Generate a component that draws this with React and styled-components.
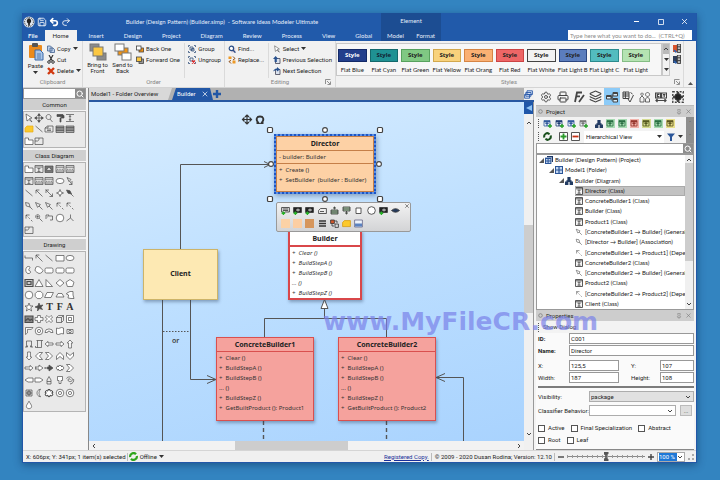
import React from 'react'
import styled, { createGlobalStyle, css } from 'styled-components'
import { Settings, Printer, Layers, Search, Undo2, Redo2, Save, X, Pin } from 'lucide-react'

const GlobalStyle = createGlobalStyle`
* {
    box-sizing: border-box;
}
body {
    margin: 0;
    background: #3384c0;
    color: #222;
    font-family: Roboto, "Liberation Sans", sans-serif;
    font-size: 6px;
    line-height: 8px;
}
button, input, select {
    margin: 0;
    padding: 0;
    border: 0;
    border-radius: 0;
    background: none;
    color: inherit;
    font: inherit;
}
svg {
    display: block;
    flex: none;
}
`

/* ---------- data ---------- */

const tabs = ['Insert', 'Design', 'Project', 'Diagram', 'Review', 'Process', 'View', 'Global']

const styleList = [
    { name: 'Flat Blue', bg: '#233f8c', line: '#142a68', color: '#fff' },
    { name: 'Flat Cyan', bg: '#1f9193', line: '#14696c', color: '#123' },
    { name: 'Flat Green', bg: '#80c883', line: '#58a25e' },
    { name: 'Flat Yellow', bg: '#f8d27c', line: '#d2a84e' },
    { name: 'Flat Orang', bg: '#fab073', line: '#d68444' },
    { name: 'Flat Red', bg: '#ee6666', line: '#cc4444' },
    { name: 'Flat White', bg: '#f2f2f2', line: '#444' },
    { name: 'Flat Light B', bg: '#5b7dbd', line: '#2c4680' },
    { name: 'Flat Light C', bg: '#53bcbf', line: '#2c8b8e' },
    { name: 'Flat Light', bg: '#b5e3b2', line: '#84bd84' },
]

const tree = [
    { level: 0, icon: 'project', text: 'Builder (Design Pattern) (Project)', open: true },
    { level: 1, icon: 'model', text: 'Model1 (Folder)', open: true },
    { level: 2, icon: 'diagram', text: 'Builder (Diagram)', open: true },
    { level: 3, icon: 'class', text: 'Director (Class)', selected: true },
    { level: 3, icon: 'class', text: 'ConcreteBuilder1 (Class)' },
    { level: 3, icon: 'class', text: 'Builder (Class)' },
    { level: 3, icon: 'class', text: 'Product1 (Class)' },
    { level: 3, icon: 'general', text: '[ConcreteBuilder1 → Builder] (General' },
    { level: 3, icon: 'assoc', text: '[Director → Builder] (Association)' },
    { level: 3, icon: 'depend', text: '[ConcreteBuilder1 → Product1] (Depen' },
    { level: 3, icon: 'class', text: 'ConcreteBuilder2 (Class)' },
    { level: 3, icon: 'general', text: '[ConcreteBuilder2 → Builder] (General' },
    { level: 3, icon: 'class', text: 'Product2 (Class)' },
    { level: 3, icon: 'depend', text: '[ConcreteBuilder2 → Product2] (Depen' },
    { level: 3, icon: 'class', text: 'Client (Class)' },
]

// every shape is drawn on a 10 x 10 grid; f = filled with the stroke colour
const shapes = {
    pointer: { d: 'M2 1L8 5L5.5 5.5L8 9L5 6.5L3 8Z' },
    move: { d: 'M5 1V9M1 5H9M5 .6L3.6 2.6H6.4ZM5 9.4L3.6 7.4H6.4ZM.6 5L2.6 3.6V6.4ZM9.4 5L7.4 3.6V6.4Z', f: true },
    zoom: { d: 'M4.5 1.5A2.5 2.5 0 1 0 4.6 1.5ZM6 6L8.5 9' },
    roller: { d: 'M2 1.5H8V3.5H2ZM8 2.5H9V5H5.5M5 5H6V9H5Z', f: true },
    space: { d: 'M1 1.5H9M1 8.5H9M5 2.5V7.5M4 4L5 2.5L6 4M4 6L5 7.5L6 6' },
    note: { d: 'M1 4L3 2H9V8H1Z', c: '#e9ae16', bg: '#fbc92c' },
    line: { d: 'M1.5 2L8.5 8' },
    stack: { d: 'M1 4L3.5 2H9V8H1ZM3 5H7M3 6.5H7M1 4H4V2' },
    list: { d: 'M1 2H9V8.5H1ZM1 3.5H9M1 5H9M1 6.5H9', bg: '#aaa' },
    folder: { d: 'M1 2H4.5V4H9V8.5H1Z' },
    frame: { d: 'M1 2H9V8.5H1ZM1 5H3.5L5 3.8V2' },
    cls: { d: 'M1 1.5H9V8.5H1ZM1 3H9M3.6 4.5H6.4M3.6 7.5H6.4M3.8 4.6L5.4 6L3.8 7.4' },
    sub: { d: 'M1 2H9V8.5H1ZM2.6 6.4H7.4V5H6.4V3.6H3.6V5H2.6Z', bg: '#777' },
    attr: { d: 'M1 1.5H9V8.5H1ZM1 3.2H9M2 5.3H3.4M4.3 5.3H5.7M6.6 5.3H8M1 7H9' },
    oval: { d: 'M1 5A4 2.6 0 1 0 9 5A4 2.6 0 1 0 1 5Z' },
    sig: { d: 'M2 1.5L6 3.5L4 5.5ZM4.5 5L7 8.5M7 5V8.5H4' },
    arrow: { d: 'M2 2L8.5 8.5M2 2V5.4M2 2H5.4' },
    arrow2: { d: 'M1.5 1.5L8.5 8.5M2 2V5M2 2H5M8.5 8.5V5.5M8.5 8.5H5.5' },
    cross: { d: 'M5 1.5L6 4L8.5 5L6 6L5 8.5L4 6L1.5 5L4 4Z' },
    dia: { d: 'M1.5 2L5 2.8L6.5 6L3 5.2ZM6 6L8.5 8.5', f: true },
    gen: { d: 'M1.5 1.5L6.4 3.6L3.6 6.4ZM5 5L8.5 8.5' },
    aggr: { d: 'M1.5 1.5L5 2.3L6 6L2.3 5ZM6 6L8.5 8.5' },
    dep: { d: 'M2 2V5.6M2 2H5.6M2 2L3.4 3.4M4.4 4.4L5.8 5.8M7 7L8.4 8.4' },
    nest: { d: 'M3.6 1.6A2 2 0 1 0 3.7 1.6M3.6 2.4V4.8M2.4 3.6H4.8M5.2 5.2L8.5 8.5' },
    loop: { d: 'M2 2V6M2 2H5L3.4 4.4M5 3H8.5V7H6' },
    circle: { d: 'M1.2 5A3.8 3.8 0 1 0 8.8 5A3.8 3.8 0 1 0 1.2 5Z' },
    fork: { d: 'M5.5 1.5V5L1.5 8M5.5 5L8.5 8' },
    elbow: { d: 'M1 2.5V5H8.5V7.5' },
    rect: { d: 'M1 2.5H9V8H1Z' },
    curve: { d: 'M4 1.5C1 2 1 8 4 8.5C7 8.8 7.5 6 5 5.6C3.6 5 6 3.4 6 2.2C5.6 1.4 5 1.4 4 1.5Z' },
    blob: { d: 'M2 2C4 .8 6.6 2 9 5.6C8 8.4 5 9 4 8C3 7 1 6.6 1 5Z' },
    round: { d: 'M2.4 3H7.6A1.4 1.4 0 0 1 9 4.4V6.6A1.4 1.4 0 0 1 7.6 8H2.4A1.4 1.4 0 0 1 1 6.6V4.4A1.4 1.4 0 0 1 2.4 3Z' },
    bevel: { d: 'M1 1.5H9V8.5H1ZM3 3.5H7V6.5H3Z', bg: '#ccc', w: 1.2 },
    tri: { d: 'M5 1.5L9 8.5H1Z' },
    rtri: { d: 'M2 1.5L8.5 8.5H2Z' },
    rhomb: { d: 'M5 1.5L9 5L5 8.5L1 5Z' },
    penta: { d: 'M5 1.5L9 4.2L7.6 8.5H2.4L1 4.2Z' },
    hexa: { d: 'M3.4 1.4H6.6L8.8 3.6V6.4L6.6 8.6H3.4L1.2 6.4V3.6Z' },
    para: { d: 'M3 2.5H9.4L7 7.5H.6Z' },
    trap: { d: 'M3 3.5H7L9 7H1Z' },
    cut: { d: 'M2 3L5 1.5H8L8 5L9 8.5H6L3 8L3.6 5L1.4 4Z' },
    star: { d: 'M5 1L6.2 4H9L6.8 5.8L7.6 9L5 7L2.4 9L3.2 5.8L1 4H3.8Z' },
    burst: { d: 'M5 1L6 3.5L9 3L7 5.2L8.5 7.5L5.5 6.6L3.5 9L3.8 6L1 5L4 3.8Z', f: true },
    pic: { d: 'M1 2H9V8.5H1ZM1 7L4 4.6L6 6.5L7.4 5.2L9 7', bg: '#888', w: 1.1 },
    plus: { d: 'M3.6 1.5H6.4V3.6H9V6.4H6.4V8.5H3.6V6.4H1V3.6H3.6Z' },
    xshape: { d: 'M3 1.5L5 3.5L7 1.5L8.6 3L6.6 5L8.6 7L7 8.6L5 6.6L3 8.6L1.4 7L3.4 5L1.4 3Z' },
    cube: { d: 'M1.5 3.5H6.5V8.5H1.5ZM1.5 3.5L3.5 1.5H8.5V6.5L6.5 8.5M6.5 3.5L8.5 1.5' },
    square2: { d: 'M1.5 1.5H8.5V8.5H1.5ZM3.5 3.5H6.5V6.5H3.5Z' },
    corner: { d: 'M1.5 8.5V1.5H9L7.4 3.4H3.4V7Z' },
    ring: { d: 'M1.2 5A3.8 3.8 0 1 0 8.8 5A3.8 3.8 0 1 0 1.2 5ZM3.4 5A1.6 1.6 0 1 0 6.6 5A1.6 1.6 0 1 0 3.4 5Z' },
    arc: { d: 'M1 6.5A4 3.6 0 0 1 9 6.5H6.6A1.6 1.4 0 0 0 3.4 6.5Z' },
    wave: { d: 'M1.5 2Q3.5 3 5 2T8.5 2V8Q6.5 7 5 8T1.5 8Z' },
    eye: { d: 'M2 3.5H8V7.5H2ZM3.6 5.5A1.4 1.2 0 1 0 6.4 5.5A1.4 1.2 0 1 0 3.6 5.5Z' },
    scroll: { d: 'M2.5 8V2H7.5V8M1 8H3.5V6.5M9 8H6.5V6.5' },
    scroll2: { d: 'M2.5 1.5H9M3.5 1.5V8.5M7.5 1.5V8.5H1.5V7' },
    left: { d: 'M1 5L4 2.4V4H9V6H4V7.6Z' },
    right: { d: 'M9 5L6 2.4V4H1V6H6V7.6Z' },
    up: { d: 'M5 1L7.8 4H6.4V9H3.6V4H2.2Z' },
    down: { d: 'M5 9L7.8 6H6.4V1H3.6V6H2.2Z' },
    chevl: { d: 'M5 1.5H8.5L5.5 5L8.5 8.5H5L1.5 5Z' },
    chevr: { d: 'M5 1.5H1.5L4.5 5L1.5 8.5H5L8.5 5Z' },
    chevu: { d: 'M1.5 5V8.5L5 5.5L8.5 8.5V5L5 1.5Z' },
    chevd: { d: 'M1.5 5V1.5L5 4.5L8.5 1.5V5L5 8.5Z' },
    notch: { d: 'M1 4H5V2L9 5L5 8V6H1L2.4 5Z' },
    fast: { d: 'M1 4V6M2 4V6M3.4 4H5V2L9 5L5 8V6H3.4Z', f: true },
    both: { d: 'M1 5L3 2.6V4L5 2L7 4V2.6L9 5L7 7.4V6L5 8L3 6V7.4Z' },
    tagl: { d: 'M1 5L4 3H9V7H4Z' },
    tagr: { d: 'M9 5L6 3H1V7H6Z' },
    lock: { d: 'M3 9V5L5 1.5L7 5V9ZM3 6.5H7' },
    cup: { d: 'M2.5 1.5H7.5V5.5H6V8.5H4V5.5H2.5Z' },
    swirl: { d: 'M5 5C6 3.6 3 3 3 5C3 7.4 7.6 7 7.4 4.4C7 1.2 2 1.4 1.6 3.6M5 9C8 8.6 9 6.6 8.6 4' },
    grid: { d: 'M2 2H8V8H2ZM3.4 3.4H6.6V6.6H3.4ZM5 2V8M2 5H8' },
    moon: { d: 'M6.6 1.2C1.8 1.6 1.8 8.4 6.6 8.8C4.4 6.4 4.4 3.6 6.6 1.2Z' },
    gear: { d: 'M4 1.5H6V3L8 2.6L9 4.4L7.6 5L9 6L8 8L6 7.2V8.6H4V7.2L2 8L1 6L2.4 5L1 4.4L2 2.6L4 3Z', w: 1 },
    drop: { d: 'M5 1.2C6 3.4 7.8 5 7.6 6.6C7.2 9.4 2.8 9.4 2.4 6.6C2.2 5 4 3.4 5 1.2Z' },
}

const common = ['pointer', 'move', 'zoom', 'roller', 'space', 'note', 'line', 'stack', 'list', 'list', 'folder', 'frame']
const classShapes = [
    'folder', 'cls', 'sub', 'attr', 'attr', 'cls', 'attr', 'attr', 'oval', 'sig', 'line', 'arrow', 'arrow2', 'cross', 'dia',
    'aggr', 'gen', 'gen', 'dep', 'dep', 'dep', 'nest', 'loop', 'circle', 'fork', 'frame',
]
const drawing = [
    'elbow', 'arrow', 'line', 'rect', 'oval', 'curve', 'blob', 'round', 'round', 'round', 'bevel', 'tri', 'rtri', 'rhomb', 'penta',
    'circle', 'hexa', 'para', 'trap', 'cut', 'star', 'burst', 'T', 'F', 'A', 'pic', 'plus', 'xshape', 'cube', 'square2',
    'corner', 'ring', 'arc', 'wave', 'eye', 'scroll', 'scroll2', 'left', 'right', 'up', 'down', 'chevl', 'chevr', 'chevu', 'chevd',
    'right', 'notch', 'fast', 'both', 'chevr', 'tagl', 'tagr', 'lock', 'cup', 'swirl', 'grid', 'moon', 'gear', 'ring', 'ring', 'drop',
]

const builderOps = ['+  Clear ()', '+  BuildStepA ()', '+  BuildStepB ()', '... ()', '+  BuildStepZ ()']

/* ---------- icons ---------- */

const Glyph = ({ name, size = 10 }) => {
    const s = shapes[name]
    if (!s) return <Letter>{name}</Letter>
    const color = s.c || '#4c4c4c'
    return (
        <svg width={size} height={size} viewBox="0 0 10 10">
            <path d={s.d} fill={s.f ? color : s.bg || (s.d.endsWith('Z') ? '#fff' : 'none')} stroke={color} strokeWidth={s.w || 0.7} />
        </svg>
    )
}

const Caret = () => (
    <svg width="5" height="3" viewBox="0 0 5 3"><path d="M0 0H5L2.5 3Z" fill="#333" /></svg>
)

const Chevron = ({ dir = 'down' }) => {
    const d = { down: 'M1 2L3 4L5 2', up: 'M1 4L3 2L5 4', left: 'M4 1L2 3L4 5', right: 'M2 1L4 3L2 5' }[dir]
    return <svg width="6" height="6" viewBox="0 0 6 6"><path d={d} fill="none" stroke="#444" /></svg>
}

const Launcher = () => (
    <svg width="6" height="6" viewBox="0 0 6 6"><path d="M.5 5V.5H5.5M2 2L5 5M5.5 2.5V5.5H2.5" fill="none" stroke="#777" strokeWidth=".8" /></svg>
)

const PasteIcon = () => (
    <svg width="16" height="18" viewBox="0 0 16 18">
        <rect x="1" y="2" width="13" height="13" rx="1" fill="#ea8a1c" />
        <rect x="4" y="0" width="6" height="4" rx="1" fill="#555" />
        <path d="M7 7H12L15 10V17H7Z" fill="#a9c6ea" stroke="#3a69a8" />
        <path d="M9 11H13M9 13H13M9 15H13" stroke="#3a69a8" strokeWidth=".8" />
    </svg>
)

const CopyIcon = () => (
    <svg width="8" height="8" viewBox="0 0 8 8">
        <path d="M.5 1H3.5L5 2.5V6H.5ZM3 3H6L7.5 4.5V7.5H3Z" fill="#bcd0ea" stroke="#44628f" strokeWidth=".8" />
    </svg>
)

const CutIcon = () => (
    <svg width="8" height="9" viewBox="0 0 8 9">
        <path d="M2 0L5.4 6M6 0L2.6 6" stroke="#333" strokeWidth="1.2" />
        <circle cx="2" cy="7" r="1.3" fill="none" stroke="#333" />
        <circle cx="6" cy="7" r="1.3" fill="none" stroke="#333" />
    </svg>
)

const DeleteIcon = () => (
    <svg width="8" height="8" viewBox="0 0 8 8"><path d="M1 1L7 7M7 1L1 7" stroke="#d1380f" strokeWidth="2.4" /></svg>
)

const ORDER = {
    front: ['#8b8b8b', '#8b8b8b', '#fbc741'],
    back: ['#fff', '#fff', '#f29312'],
}

const OrderIcon = ({ kind }) => (
    <svg width="18" height="18" viewBox="0 0 18 18" stroke="#777">
        {kind === 'back' && <rect x="4" y="5" width="10" height="7" fill={ORDER.back[2]} />}
        <rect x="1" y="1" width="9" height="7" fill={ORDER[kind][0]} />
        <rect x="8" y="10" width="9" height="7" fill={ORDER[kind][1]} />
        {kind === 'front' && <rect x="4" y="4" width="10" height="9" fill={ORDER.front[2]} />}
    </svg>
)

const BackOneIcon = () => (
    <svg width="8" height="8" viewBox="0 0 8 8" stroke="#444" strokeWidth=".8">
        <rect x="3" y="3" width="4.5" height="4" fill="#f29312" />
        <rect x=".5" y="1" width="4.5" height="4" fill="#fff" />
    </svg>
)

const ForwardOneIcon = () => (
    <svg width="8" height="8" viewBox="0 0 8 8" stroke="#444" strokeWidth=".8">
        <rect x="3" y="3" width="4.5" height="4.5" fill="#999" />
        <rect x=".5" y="1" width="5" height="4.5" fill="#fbc741" />
    </svg>
)

const GroupIcon = ({ off }) => (
    <svg width="8" height="8" viewBox="0 0 8 8" fill="none" stroke="#33507c" strokeWidth=".8">
        <path d="M.5 2V.5H2M6 .5H7.5V2M7.5 6V7.5H6M2 7.5H.5V6" />
        <path d="M2 2H5V5H2Z" />
        {off ? <path d="M4 4.5L7 7.5M7 4.5L4 7.5" stroke="#d22" strokeWidth="1.2" /> : <path d="M3.5 3.5H6V6H3.5Z" />}
    </svg>
)

const FindIcon = () => (
    <svg width="8" height="8" viewBox="0 0 8 8">
        <path d="M3.4 2.6H7.5V7.5H3.4Z" fill="#e3d0d8" />
        <circle cx="3.4" cy="3.4" r="2.2" fill="#fff" stroke="#2a4d86" strokeWidth="1.2" />
        <path d="M5 5L7.4 7.6" stroke="#2a4d86" strokeWidth="1.4" />
    </svg>
)

const ReplaceIcon = () => (
    <svg width="8" height="8" viewBox="0 0 8 8">
        <path d="M.5 .5H3.5V3H.5ZM4.5 4.5H7.5V7.5H4.5Z" fill="#ee9a26" />
        <path d="M5 .5L7 2.5L5 4M3 7.5L1 5.5L3 4.4" fill="none" stroke="#8a4b13" />
    </svg>
)

const PrevNextIcon = ({ next }) => (
    <svg width="8" height="8" viewBox="0 0 8 8">
        <path d="M2.5 2.5H7V7.5H2.5Z" fill="#dbe3ef" stroke="#445" strokeWidth=".8" />
        <path d={next ? 'M0 4.5C1 2 3 1.6 4 1.6V0L7 2.4L4 4.6V3.2C3 3.2 1 3.4 0 4.5Z' : 'M2.6 0L5.4 3H3.8V6H1.6V3H0Z'} fill="#28518e" />
    </svg>
)

const TreeIcon = ({ kind }) => {
    if (kind === 'general') return <Glyph name="gen" size={8} />
    if (kind === 'assoc') return <Glyph name="aggr" size={8} />
    if (kind === 'depend') return <Glyph name="dep" size={8} />
    if (kind === 'class') {
        return (
            <svg width="8" height="8" viewBox="0 0 8 8" fill="none" stroke="#333">
                <path d="M.5 .5H7.5V7.5H.5Z" fill="#f4f4f4" strokeWidth=".8" />
                <path d="M.5 1.8H7.5M2.6 3.2H5.6M2.6 6.2H5.6M4 3.4V6" strokeWidth=".8" />
            </svg>
        )
    }
    if (kind === 'diagram') {
        return (
            <svg width="8" height="8" viewBox="0 0 8 8" fill="#233c63">
                <path d="M2.4 0H5.6V3.2H2.4ZM0 4.6H3.4V8H0ZM4.6 4.6H8V8H4.6ZM1.4 3.2H6.6V5H1.4Z" />
            </svg>
        )
    }
    return (
        <svg width="8" height="8" viewBox="0 0 8 8" fill="#2a5598">
            {kind === 'project' && <path d="M2 0H8V6H6.8V1.2H2Z" fill="#1d3766" />}
            <path d={kind === 'project' ? 'M0 1.6H6.4V8H0Z' : 'M0 0H8V8H0Z'} />
            <path d={kind === 'project' ? 'M1 3H2.6V4.4H1ZM3.6 3H5.4V4.4H3.6ZM1 5.4H2.6V7H1ZM3.6 5.4H5.4V7H3.6Z' : 'M1 1H3.4V3.4H1ZM4.6 1H7V3.4H4.6ZM1 4.6H3.4V7H1ZM4.6 4.6H7V7H4.6Z'} fill="#c3d6f0" />
        </svg>
    )
}

const ToolIcon = ({ kind }) => (
    <svg width="12" height="12" viewBox="0 0 12 12" fill="none" stroke="#444">
        {kind === 'format' && <path d="M2 11L4 1.5H9M3 5.4H7M11 4L7.4 9L6 11" strokeWidth="1.8" />}
        {kind === 'structure' && (
            <g>
                <path d="M.5 4.5H5V8H.5ZM7 1.5H11.5V5H7ZM7 7.5H11.5V11H7Z" fill="#d9eefc" />
                <path d="M7 2.5H11.5M7 8.5H11.5M5 6H7M6 3.5V9.5M.5 5.5H5" strokeWidth="1.2" />
            </g>
        )}
        {kind === 'docs' && <path d="M1 1H7V7.5H1ZM1 3H7M1 5H7M3.4 1V7.5M6 8L8 11L11.5 4M8.5 1.5L10.5 3" />}
        {kind === 'people' && (
            <path d="M3 2A1.2 1.2 0 1 0 3.1 2M1 11V7L3 5L5 7V11ZM8.5 1.5A2 2 0 1 0 8.6 1.5M6.5 11V8L8.5 6L10.5 8V11Z" strokeWidth=".8" />
        )}
        {kind === 'ct' && <path d="M.6 2H5.6V7H.6ZM6.6 2H11.6V7H6.6ZM4.4 3.4H2.4V5.6H4.4M8 3.6H10.4M9.2 3.6V6M1 9.5H11M2.5 8L1 9.5L2.5 11M9.5 8L11 9.5L9.5 11" strokeWidth="1.2" />}
        {kind === 'sun' && (
            <g>
                <path d="M.8 .8H11.2V11.2H.8Z" strokeDasharray="2 1.4" strokeWidth="1.4" />
                <path d="M6 1V11M1 6H11" strokeWidth="2" />
                <circle cx="6" cy="6" r="3.4" fill="#222" />
            </g>
        )}
    </svg>
)

const DocIcon = ({ color = '#31589c', tint, add }) => (
    <svg width="9" height="9" viewBox="0 0 9 9">
        {tint && <path d="M0 0H9V9H0Z" fill={tint} />}
        <path d="M1 1.5H7V7H1Z" fill={tint || '#eef3fa'} stroke={color} strokeWidth=".8" />
        <path d="M1 2.6H7M2.4 4.4H5.6M4 3V7" stroke={color} strokeWidth="1.2" />
        {add && <path d="M7 5V9M5 7H9" stroke="#28a428" strokeWidth="1.4" />}
    </svg>
)

const PopupIcon = ({ kind }) => (
    <svg width="9" height="9" viewBox="0 0 9 9" stroke="#333" strokeWidth=".8">
        {kind === 'light' && <path d="M.6 1.5H8.4V6H4L2 8V6H.6ZM2 3H7M2 4.5H7" fill="#ddd" />}
        {kind === 'dark' && <path d="M.6 1.5H8.4V6.5H4L2 8V6.5H.6Z" fill="#222" />}
        {kind === 'dark' && <path d="M3 4H7M5 2.5V5.5" stroke="#eee" />}
        {(kind === 'light' || kind === 'dark') && <path d="M2.4 5.4V9M.6 7.2H4.2" stroke="#27b227" strokeWidth="1.4" />}
        {kind === 'tag' && <path d="M.6 4.4L2.6 2.5H8.4V7.5H.6ZM2 5.5H6" fill="#eee" />}
        {kind === 'in' && <path d="M1 4H8V8H1ZM1 6H8M4.5 3.5V1M3 2.4L4.5 1L6 2.4" fill="#9b9" />}
        {kind === 'out' && <path d="M1 1H8V5H1ZM1 3H8M4.5 5V8M3 6.6L4.5 8L6 6.6" fill="#aca" />}
        {kind === 'square' && <path d="M2 2H7V7.5H2Z" fill="#fff" />}
        {kind === 'circle' && <circle cx="4.5" cy="4.5" r="3.8" fill="#fff" />}
        {kind === 'eye' && <path d="M.5 4.5Q4.5 .8 8.5 4.5Q4.5 8 .5 4.5Z" fill="#243a5c" />}
        {kind === 'lines' && <path d="M1 2H8M1 4.5H8M1 7H8" strokeWidth="1.6" />}
        {kind === 'swap' && <path d="M.6 1H4.4V4.5H.6Z" fill="#d2572b" />}
        {kind === 'swap' && <path d="M5 5H8.4V8.4H5ZM5 2H7V4M4 7H2V5" fill="none" />}
        {kind === 'folder' && <path d="M.6 3.5L2.4 1.6H8.4V7.6H.6Z" fill="#fcc92c" stroke="#d69c12" />}
        {kind === 'panel' && <path d="M.6 1H8.4V8H.6Z" fill="#eef3fa" stroke="#668" />}
        {kind === 'panel' && <path d="M1 6H8" stroke="#5b82c0" strokeWidth="3" />}
    </svg>
)

/* ---------- small parts ---------- */

const SmallButton = ({ icon, label, menu }) => (
    <RibbonItem type="button">
        {icon}
        <span>{label}</span>
        {menu && <Caret />}
    </RibbonItem>
)

const ClassBox = ({ title, items, ...rest }) => (
    <Entity {...rest}>
        <EntityTitle>{title}</EntityTitle>
        <EntityBody>
            {items.map((item, i) => <span key={i}>{item}</span>)}
        </EntityBody>
    </Entity>
)

const Palette = ({ title, items, height }) => (
    <>
        <PaletteTitle>{title}</PaletteTitle>
        <PaletteGrid $height={height}>
            {items.map((name, i) => (
                <PaletteButton type="button" key={i} aria-label={name}><Glyph name={name} /></PaletteButton>
            ))}
        </PaletteGrid>
    </>
)

const PanelTitle = ({ children }) => (
    <PanelHeader>
        <svg width="5" height="5" viewBox="0 0 5 5"><circle cx="2.5" cy="2.5" r="1.8" fill="none" stroke="#777" strokeWidth=".7" /></svg>
        <h2>{children}</h2>
        <Pin size={6} color="#777" />
        <X size={7} color="#777" />
    </PanelHeader>
)

/* ---------- page parts ---------- */

const TitleBar = () => (
    <Header>
        <TitleRow>
            <svg width="12" height="12" viewBox="0 0 13 13">
                <circle cx="6.5" cy="6.5" r="6" fill="#dfe6ee" />
                <circle cx="6.5" cy="6.5" r="4.8" fill="none" stroke="#333" strokeDasharray="1.4 1" />
                <path d="M6.5 2.4C10 4 9 7 7.4 8V10.6H5.6V8C4 7 3 4 6.5 2.4Z" fill="#222" />
            </svg>
            <QuickButton type="button" aria-label="Save"><Save size={10} strokeWidth={2} /></QuickButton>
            <QuickButton type="button" aria-label="Undo"><Undo2 size={10} strokeWidth={4} /></QuickButton>
            <QuickButton type="button" aria-label="Redo"><Redo2 size={10} strokeWidth={2} /></QuickButton>
            <Title>Builder (Design Pattern) (Builder.simp)&nbsp; - Software Ideas Modeler Ultimate</Title>
        </TitleRow>
        <ContextTitle>Element</ContextTitle>
        <WindowButtons>
            <button type="button" aria-label="Minimize"><svg width="7" height="7"><path d="M1 3.5H6" stroke="#fff" /></svg></button>
            <button type="button" aria-label="Maximize"><svg width="7" height="7"><path d="M1.5 1.5H6.5V6.5H1.5Z" fill="none" stroke="#fff" strokeWidth=".8" /></svg></button>
            <button type="button" aria-label="Close"><svg width="7" height="7"><path d="M1 1L6 6M6 1L1 6" stroke="#fff" strokeWidth=".8" /></svg></button>
        </WindowButtons>
        <TabRow>
            <FileTab type="button">File</FileTab>
            <HomeTab type="button">Home</HomeTab>
            {tabs.map((t) => <Tab type="button" key={t}>{t}</Tab>)}
        </TabRow>
        <ContextTabs>
            <button type="button">Model</button>
            <button type="button">Format</button>
        </ContextTabs>
        <CommandSearch aria-label="Command search" placeholder="Type here what you want to do...  (CTRL+Q)" />
    </Header>
)

const Ribbon = () => (
    <RibbonBar>
        <Group $width={60}>
            <GroupBody>
                <PasteButton type="button"><PasteIcon />Paste<Caret /></PasteButton>
                <Stack>
                    <SmallButton icon={<CopyIcon />} label="Copy" menu />
                    <SmallButton icon={<CutIcon />} label="Cut" />
                    <SmallButton icon={<DeleteIcon />} label="Delete" menu />
                </Stack>
            </GroupBody>
            <GroupLabel>Clipboard</GroupLabel>
        </Group>
        <Group $width={142}>
            <GroupBody>
                <BigButton type="button"><OrderIcon kind="front" />Bring to Front</BigButton>
                <BigButton type="button"><OrderIcon kind="back" />Send to Back</BigButton>
                <Stack>
                    <SmallButton icon={<BackOneIcon />} label="Back One" />
                    <SmallButton icon={<ForwardOneIcon />} label="Forward One" />
                </Stack>
                <Divider />
                <Stack>
                    <SmallButton icon={<GroupIcon />} label="Group" />
                    <SmallButton icon={<GroupIcon off />} label="Ungroup" />
                </Stack>
            </GroupBody>
            <GroupLabel>Order</GroupLabel>
        </Group>
        <Group $width={111}>
            <GroupBody>
                <Stack>
                    <SmallButton icon={<FindIcon />} label="Find..." />
                    <SmallButton icon={<ReplaceIcon />} label="Replace..." />
                </Stack>
                <Divider />
                <Stack>
                    <SmallButton icon={<Glyph name="pointer" size={8} />} label="Select" menu />
                    <SmallButton icon={<PrevNextIcon />} label="Previous Selection" />
                    <SmallButton icon={<PrevNextIcon next />} label="Next Selection" />
                </Stack>
            </GroupBody>
            <GroupLabel>Editing<Launcher /></GroupLabel>
        </Group>
        <Group $grow>
            <GroupBody>
                <Gallery>
                    {styleList.map((s) => (
                        <StyleCell type="button" key={s.name}>
                            <Swatch $bg={s.bg} $line={s.line} $color={s.color}>Style</Swatch>
                            <span>{s.name}</span>
                        </StyleCell>
                    ))}
                </Gallery>
                <GalleryScroll>
                    <button type="button" aria-label="Previous styles"><Chevron dir="up" /></button>
                    <button type="button" aria-label="Next styles"><Caret /></button>
                    <button type="button" aria-label="All styles"><Caret /></button>
                </GalleryScroll>
                <Stack>
                    {['#d8542c', '#2f3d58'].map((c) => (
                        <RibbonItem type="button" key={c} aria-label="Style set">
                            <svg width="8" height="9" viewBox="0 0 8 9">
                                <path d="M0 1H4V8H0Z" fill={c} />
                                <path d="M4.4 0H7.6V8.6H4.4ZM4.4 2.8H7.6M4.4 5.6H7.6" fill="#bbb" stroke="#333" strokeWidth=".9" />
                                <path d="M1 6L3.4 8.4" stroke="#2c64b4" strokeWidth="1.6" />
                            </svg>
                        </RibbonItem>
                    ))}
                </Stack>
            </GroupBody>
            <GroupLabel>Styles<Launcher /></GroupLabel>
        </Group>
        <Collapse type="button" aria-label="Collapse ribbon">
            <svg width="5" height="3" viewBox="0 0 5 3"><path d="M0 3H5L2.5 0Z" fill="#555" /></svg>
        </Collapse>
    </RibbonBar>
)

const Toolbox = () => (
    <ToolboxPanel>
        <SearchRow>
            <input aria-label="Search toolbox" />
            <button type="button" aria-label="Search"><Search size={8} strokeWidth={3} /></button>
        </SearchRow>
        <Palette title="Common" items={common} height={37} />
        <Palette title="Class Diagram" items={classShapes} height={75} />
        <Palette title="Drawing" items={drawing} height={161} />
    </ToolboxPanel>
)

const Handles = () => (
    <g fill="#fff" stroke="#444">
        {[[181, 28], [291, 28], [181, 97], [291, 97]].map(([x, y]) => (
            <rect key={`${x}-${y}`} x={x - 2.5} y={y - 2.5} width="5" height="5" rx="1" strokeWidth="1.2" />
        ))}
        {[[236, 28], [182, 62], [290, 62], [236, 97]].map(([x, y]) => (
            <circle key={`${x}-${y}`} cx={x} cy={y} r="2.4" strokeWidth="1.1" />
        ))}
    </g>
)

const Diagram = () => (
    <Canvas>
        <Wires fill="none" stroke="#555">
            <path d="M91.5 147V62.5H181M175 59.5L181 62.5L175 65.5" />
            <path d="M73.5 197V339M101.5 197V277.5H126M118 273.5L127 277.5L118 281.5" />
            <path d="M74 229.5H101" strokeDasharray="1.5 1.5" />
            <path d="M175.5 235V216.5H297.5V235M235.5 216V206" />
            <path d="M235.5 197.5L239 206.5H232Z" fill="#fff" />
            <path d="M174.5 319V339M297.5 319V339" strokeDasharray="4 3" strokeWidth="1.4" />
            <path d="M374.5 339V275.5H347M356 271.5L347 275.5L356 279.5" />
            <path d="M158 13V22M153.5 17.5H162.5M156 15L158 13L160 15M156 20L158 22L160 20M155.5 15.5L153.5 17.5L155.5 19.5M160.5 15.5L162.5 17.5L160.5 19.5" stroke="#333" strokeWidth="1.2" />
            <path d="M167.5 21H169.5C166 17 168 14.5 171 14.5S176 17 172.5 21H174.5" stroke="#333" strokeWidth="1.8" />
        </Wires>
        <SimpleEntity $x={54} $y={147}>Client</SimpleEntity>
        <Caption $x={83} $y={235}>or</Caption>
        <ClassBox title="Builder" items={builderOps} $x={199} $y={128} $w={74} $h={70} $bg="#fff" $line="#d9474a" $thick $italic />
        {[1, 2].map((n) => (
            <ClassBox
                key={n}
                title={`ConcreteBuilder${n}`}
                items={[...builderOps, `+  GetBuiltProduct (): Product${n}`]}
                $x={n === 1 ? 127 : 249}
                $y={235}
                $w={98}
                $h={84}
                $bg="#f5a29d"
                $line="#d9504f"
            />
        ))}
        <Selection>
            <EntityTitle>Director</EntityTitle>
            <EntityBody><span>- builder: Builder</span></EntityBody>
            <EntityBody>
                <span>+  Create ()</span>
                <span>+  SetBuilder&nbsp; (builder : Builder)</span>
            </EntityBody>
        </Selection>
        <Wires><Handles /></Wires>
        <Popup>
            {['light', 'dark', 'dark', 'tag', 'in', 'out', 'square', 'circle', 'dark', 'eye'].map((k, i) => (
                <button type="button" key={i} aria-label={k}><PopupIcon kind={k} /></button>
            ))}
            {['#fcd2a6', '#fccea2', '#d6965c'].map((c) => <ColorButton type="button" key={c} aria-label="Fill" $color={c} />)}
            {['lines', 'swap', 'folder', 'panel'].map((k) => (
                <button type="button" key={k} aria-label={k}><PopupIcon kind={k} /></button>
            ))}
            <PopupClose type="button" aria-label="Close"><X size={6} /></PopupClose>
        </Popup>
    </Canvas>
)

const Documents = () => (
    <DocArea>
        <DocTabs>
            <DocTab type="button">Model1 - Folder Overview</DocTab>
            <ActiveTab type="button">Builder<X size={8} strokeWidth={2} /></ActiveTab>
            <AddTab type="button" aria-label="New tab"><svg width="8" height="8"><path d="M4 0V8M0 4H8" stroke="#2257a6" strokeWidth="2.4" /></svg></AddTab>
            <WindowsButton type="button" aria-label="Windows">
                <svg width="9" height="9" viewBox="0 0 9 9" fill="#dfe9f8" stroke="#2858a8" strokeWidth=".9">
                    <path d="M3 .8H8.4V4.5H3ZM1.8 2.5H7V6.2H1.8ZM.6 4.4H5.6V8.2H.6Z" />
                </svg>
            </WindowsButton>
        </DocTabs>
        <DocBody>
            <Diagram />
            <VScroll>
                <SideToggle type="button" aria-label="Show panel"><svg width="6" height="6"><path d="M0 3L6 0V6Z" fill="#8fc3f4" /></svg></SideToggle>
                <Chevron dir="up" />
                <Track><VThumb /></Track>
                <Chevron />
            </VScroll>
            <HScroll>
                <Chevron dir="left" />
                <Track><HThumb /></Track>
                <Chevron dir="right" />
            </HScroll>
        </DocBody>
    </DocArea>
)

const ProjectPanel = () => (
    <>
        <PanelTitle>Project</PanelTitle>
        <PanelTools>
            <Grip />
            <DocIcon add /><DocIcon add color="#203c74" /><DocIcon add /><DocIcon color="#777" add />
            <Space />
            <TreeIcon kind="diagram" />
            <DocIcon tint="#a9dcb4" color="#2a6e43" /><DocIcon tint="#a9dcb4" color="#2a6e43" /><DocIcon tint="#f3b4ac" color="#96352c" />
            <DocIcon tint="#d5dc90" color="#555a20" /><DocIcon tint="#a9dcb4" color="#2a6e43" /><DocIcon tint="#e9e08c" color="#5a5420" />
            <More>·</More>
        </PanelTools>
        <PanelTools>
            <Grip />
            <svg width="9" height="9" viewBox="0 0 9 9"><path d="M1.5 5.5A3 3 0 0 1 6.5 2.3M7.5 3.5A3 3 0 0 1 2.5 6.7" fill="none" stroke="#194f1c" strokeWidth="2" /></svg>
            <Space />
            <svg width="9" height="9" viewBox="0 0 9 9"><path d="M.5 .5H8.5V8.5H.5Z" fill="#fff" stroke="#555" /><path d="M4.5 1.5V7.5M1.5 4.5H7.5" stroke="#2a9a2a" strokeWidth="1.8" /></svg>
            <svg width="9" height="9" viewBox="0 0 9 9"><path d="M.5 .5H8.5V8.5H.5Z" fill="#fff" stroke="#555" /><path d="M1.5 4.5H7.5" stroke="#c63216" strokeWidth="1.8" /></svg>
            <ViewSelect>
                <select aria-label="View"><option>Hierarchical View</option></select>
                <Caret />
            </ViewSelect>
            <svg width="8" height="8" viewBox="0 0 8 8"><path d="M0 .5H8L5 4V8H3V4Z" fill="#2a5598" /></svg>
            <Caret />
            <More>·</More>
        </PanelTools>
        <SearchRow>
            <input aria-label="Search project" />
            <button type="button" aria-label="Search"><Search size={8} strokeWidth={3} /></button>
        </SearchRow>
        <TreeBox>
            <TreeList>
                {tree.map((node, i) => (
                    <TreeRow key={i} $level={node.level} $selected={node.selected}>
                        <Expander>{node.open && <svg width="5" height="5"><path d="M5 0V5H0Z" fill="#555" /></svg>}</Expander>
                        <TreeLabel>
                            <TreeIcon kind={node.icon} />
                            <span>{node.text}</span>
                        </TreeLabel>
                    </TreeRow>
                ))}
            </TreeList>
            <TreeScroll>
                <Chevron dir="up" />
                <Track><TreeThumb /></Track>
                <Chevron />
            </TreeScroll>
        </TreeBox>
    </>
)

const PropertiesPanel = () => (
    <>
        <PanelTitle>Properties</PanelTitle>
        <PanelTools $plain><Grip /><button type="button">Show Dialog</button></PanelTools>
        <Form>
            <NameFields>
                <label htmlFor="id">ID:</label><TextInput id="id" defaultValue="C001" />
                <label htmlFor="name">Name:</label><TextInput id="name" defaultValue="Director" />
            </NameFields>
            <SizeFields>
                <label htmlFor="x">X:</label><TextInput id="x" defaultValue="125,5" />
                <label htmlFor="y">Y:</label><TextInput id="y" defaultValue="107" />
                <label htmlFor="width">Width:</label><TextInput id="width" defaultValue="187" />
                <label htmlFor="height">Height:</label><TextInput id="height" defaultValue="108" />
            </SizeFields>
            <Rule />
            <SelectRow>
                <label htmlFor="visibility">Visibility:</label>
                <SelectBox $grey><select id="visibility"><option>package</option></select><Chevron /></SelectBox>
            </SelectRow>
            <SelectRow>
                <label htmlFor="behavior">Classifier Behavior:</label>
                <SelectBox><select id="behavior" /><Chevron /></SelectBox>
                <DotsButton type="button">...</DotsButton>
            </SelectRow>
            <Checks>
                {['Active', 'Final Specialization', 'Abstract', 'Root', 'Leaf'].map((c) => (
                    <label key={c}><input type="checkbox" />{c}</label>
                ))}
            </Checks>
        </Form>
    </>
)

const StatusBar = () => (
    <Footer>
        <StatusText>X: 606px; Y: 341px; 1 item(s) selected</StatusText>
        <StatusButton type="button">
            <svg width="9" height="9" viewBox="0 0 9 9"><path d="M1.2 5A3.3 3.3 0 0 1 7 2.3M7.8 4A3.3 3.3 0 0 1 2 6.7" fill="none" stroke="#2fa51d" strokeWidth="2.2" /></svg>
            Offline
            <Caret />
        </StatusButton>
        <FooterLink href="#license">Registered Copy.</FooterLink>
        <Version>© 2009 - 2020 Dusan Rodina; Version: 12.10</Version>
        <ZoomTools>
            <button type="button" aria-label="Zoom out"><svg width="6" height="6"><path d="M0 3H6" stroke="#444" strokeWidth="1.4" /></svg></button>
            <Slider type="range" aria-label="Zoom" defaultValue="50" />
            <button type="button" aria-label="Zoom in"><svg width="6" height="6"><path d="M0 3H6M3 0V6" stroke="#444" strokeWidth="1.4" /></svg></button>
            <ZoomSelect>
                <select aria-label="Zoom level"><option>100 %</option></select>
                <Chevron />
            </ZoomSelect>
            <svg width="6" height="6"><path d="M4 0H6V2H4ZM4 4H6V6H4ZM0 4H2V6H0Z" fill="#aaa" /></svg>
        </ZoomTools>
    </Footer>
)

const App = () => (
    <Page>
        <GlobalStyle />
        <Window>
            <TitleBar />
            <Ribbon />
            <Main>
                <Toolbox />
                <Documents />
                <Side>
                    <SideTabs>
                        <button type="button" aria-label="Settings"><Settings size={12} color="#555" /></button>
                        <button type="button" aria-label="Print"><Printer size={12} color="#444" /></button>
                        <button type="button" aria-label="Format"><ToolIcon kind="format" /></button>
                        <button type="button" aria-label="Layers"><Layers size={13} color="#444" /></button>
                        <ActiveSide type="button" aria-label="Structure"><ToolIcon kind="structure" /></ActiveSide>
                        <button type="button" aria-label="Documents"><ToolIcon kind="docs" /></button>
                        <button type="button" aria-label="Stakeholders"><ToolIcon kind="people" /></button>
                        <button type="button" aria-label="Translation"><ToolIcon kind="ct" /></button>
                        <button type="button" aria-label="Appearance"><ToolIcon kind="sun" /></button>
                    </SideTabs>
                    <ProjectPanel />
                    <PropertiesPanel />
                </Side>
            </Main>
            <StatusBar />
            <Watermark>www.MyFileCR.com</Watermark>
        </Window>
    </Page>
)

export default App

/* ---------- styles ---------- */

const narrow = css`
font-family: Lato, Roboto, sans-serif;
`

const Page = styled.div`
min-height: 100vh;
padding: 13px 23px 18px 22px;
display: flex;
`;

const Window = styled.div`
position: relative;
flex: 1;
min-width: 0;
display: flex;
flex-direction: column;
background: #f0f0f0;
border: solid #2257a8;
border-width: 0 1px 1px;
box-shadow: 0 2px 8px rgba(0, 30, 70, 0.45);
`;

const Header = styled.header`
${narrow}
display: grid;
grid-template-columns: 358px 60px 1fr;
grid-template-rows: 17px 11px;
background: #215aaa;
color: #e6eefa;
`;

const TitleRow = styled.div`
display: flex;
align-items: center;
gap: 2px;
`;

const QuickButton = styled.button`
color: #fff;
`;

const Title = styled.h1`
flex: 1;
margin: 0;
padding-right: 10px;
font-size: 6px;
font-weight: 400;
text-align: center;
`;

const ContextTitle = styled.div`
background: #1c4d92;
text-align: center;
line-height: 16px;
`;

const WindowButtons = styled.div`
display: flex;
justify-content: flex-end;
align-items: center;
gap: 17px;
padding-right: 8px;
`;

const TabRow = styled.nav`
display: flex;
align-items: stretch;
`;

const Tab = styled.button`
padding: 0 10px;
`;

const FileTab = styled(Tab)`
padding: 0 5px;
font-weight: 700;
`;

const HomeTab = styled(Tab)`
margin: 0 2px;
padding: 0 8px;
background: #f1f1f1;
color: #222;
`;

const ContextTabs = styled.nav`
display: flex;
justify-content: space-between;
padding: 0 6px;
background: #1c4d92;
`;

const CommandSearch = styled.input`
justify-self: end;
width: 124px;
height: 10px;
margin-right: 4px;
padding-left: 2px;
background: #fff;
color: #333;
&::placeholder {
    color: #8a8a8a;
}
`;

const RibbonBar = styled.div`
display: flex;
height: 47px;
background: #f1f1f1;
border-bottom: 1px solid #d4d4d4;
`;

const Group = styled.section`
display: flex;
flex-direction: column;
${p => p.$grow ? 'flex: 1; min-width: 0;' : `width: ${p.$width}px;`}
padding: ${p => p.$grow ? '2px 1px 1px 0' : '2px 2px 1px'};
border-right: 1px solid #dadada;
`;

const GroupBody = styled.div`
flex: 1;
display: flex;
align-items: flex-start;
`;

const GroupLabel = styled.div`
position: relative;
color: #858585;
text-align: center;
svg {
    position: absolute;
    right: 2px;
    top: 1px;
}
`;

const BigButton = styled.button`
width: 25px;
flex: none;
display: flex;
flex-direction: column;
align-items: center;
gap: 1px;
line-height: 6px;
`;

const PasteButton = styled(BigButton)`
width: 21px;
gap: 2px;
`;

const Stack = styled.div`
display: flex;
flex-direction: column;
`;

const RibbonItem = styled.button`
display: flex;
align-items: center;
gap: 2px;
height: 11px;
padding: 0 1px;
white-space: nowrap;
`;

const Divider = styled.i`
align-self: stretch;
width: 1px;
margin: 0 3px;
background: #dadada;
`;

const Gallery = styled.div`
flex: 1;
min-width: 0;
display: grid;
grid-template-columns: repeat(10, minmax(0, 1fr));
gap: 3px;
height: 33px;
padding: 5px 11px 0 1px;
border: 1px solid #c8c8c8;
background: #f7f7f7;
`;

const StyleCell = styled.button`
${narrow}
display: flex;
flex-direction: column;
align-items: center;
gap: 4px;
white-space: nowrap;
`;

const Swatch = styled.span`
align-self: stretch;
height: 13px;
line-height: 11px;
border: 1px solid ${p => p.$line};
background: ${p => p.$bg};
color: ${p => p.$color || '#222'};
font-family: "Open Sans", sans-serif;
font-weight: 700;
`;

const GalleryScroll = styled.div`
width: 8px;
margin-right: 2px;
height: 33px;
display: flex;
flex-direction: column;
border: 1px solid #c8c8c8;
button {
    flex: 1;
    display: flex;
    align-items: center;
    justify-content: center;
}
button:first-child {
    background: #b9b9b9;
}
`;

const Collapse = styled.button`
width: 12px;
display: flex;
align-items: flex-end;
justify-content: center;
padding-bottom: 2px;
`;

const Main = styled.main`
flex: 1;
display: grid;
grid-template-columns: 65px minmax(0, 1fr) 162px;
`;

const ToolboxPanel = styled.aside`
display: flex;
flex-direction: column;
padding-right: 2px;
background: #f5f5f5;
`;

const SearchRow = styled.div`
display: flex;
height: 11px;
border: 1px solid #999;
input {
    flex: 1;
    min-width: 0;
    background: #fff;
}
button {
    width: 10px;
    display: flex;
    align-items: center;
    justify-content: center;
    background: #8d8d8d;
    color: #fff;
}
`;

const PaletteTitle = styled.h2`
margin: 0;
height: 11px;
background: #cfcfcf;
font-size: 6px;
font-weight: 400;
line-height: 11px;
text-align: center;
`;

const PaletteGrid = styled.div`
display: grid;
grid-template-columns: repeat(5, 1fr);
grid-auto-rows: 1fr;
height: ${p => p.$height}px;
margin: 1px 0 2px;
padding-right: 10px;
border: 1px solid #b4b4b4;
background: #e9e9e9;
`;

const PaletteButton = styled.button`
display: flex;
align-items: center;
justify-content: center;
min-width: 0;
`;

const Letter = styled.span`
color: #333;
font-family: "Liberation Serif", serif;
font-size: 10px;
font-weight: 700;
`;

const DocArea = styled.section`
display: flex;
flex-direction: column;
border-left: 1px solid #888;
`;

const DocTabs = styled.div`
display: flex;
height: 14px;
background: #b1b1b1;
border-bottom: 2px solid #2858a2;
`;

const DocTab = styled.button`
width: 83px;
padding-left: 2px;
background: #d8d8d8;
text-align: left;
clip-path: polygon(0 0, 100% 0, calc(100% - 4px) 100%, 0 100%);
`;

const ActiveTab = styled.button`
display: flex;
align-items: center;
gap: 5px;
width: 41px;
padding-left: 5px;
background: #2257a6;
color: #fff;
clip-path: polygon(4px 0, calc(100% - 3px) 0, 100% 100%, 0 100%);
`;

const AddTab = styled.button`
display: flex;
align-items: center;
`;

const WindowsButton = styled.button`
margin-left: auto;
width: 10px;
background: #f0f0f0;
`;

const DocBody = styled.div`
flex: 1;
display: grid;
grid-template-columns: minmax(0, 1fr) 10px;
grid-template-rows: minmax(0, 1fr) 9px;
`;

const VScroll = styled.div`
grid-row: 1 / 3;
grid-column: 2;
display: flex;
flex-direction: column;
align-items: center;
padding-bottom: 10px;
background: #f0f0f0;
border-right: 1px solid #999;
> svg {
    margin: 3px 0;
}
`;

const SideToggle = styled.button`
align-self: stretch;
height: 12px;
margin-bottom: 3px;
display: flex;
align-items: center;
justify-content: center;
background: #1f56a8;
`;

const HScroll = styled.div`
grid-row: 2;
grid-column: 1;
display: flex;
align-items: center;
padding: 0 2px;
background: #f2f2f2;
`;

const Track = styled.div`
flex: 1;
align-self: stretch;
`;

const thumb = css`
background: #cdcdcd;
`

const VThumb = styled.div`
${thumb}
margin-top: 96px;
height: 88px;
`;

const HThumb = styled.div`
${thumb}
height: 9px;
margin-left: 33%;
width: 27%;
`;

const Canvas = styled.div`
position: relative;
overflow: hidden;
min-height: 339px;
background: linear-gradient(165deg, #d8edff, #bfe0ff 45%, #a9d3fe);
`;

const Wires = styled.svg`
position: absolute;
inset: 0;
width: 100%;
height: 100%;
`;

const Entity = styled.div`
position: absolute;
left: ${p => p.$x}px;
top: ${p => p.$y}px;
width: ${p => p.$w}px;
height: ${p => p.$h}px;
border: ${p => p.$thick ? 2 : 1}px solid ${p => p.$line};
background: ${p => p.$bg};
box-shadow: 1px 2px 3px rgba(40, 60, 90, 0.4);
color: #333;
font-family: "Noto Sans", "Open Sans", sans-serif;
font-size: 6px;
font-style: ${p => p.$italic ? 'italic' : 'normal'};
line-height: 10px;
> * + * {
    border-top: ${p => p.$thick ? 2 : 1}px solid ${p => p.$line};
}
`;

const EntityTitle = styled.div`
height: 13px;
color: #222;
font-size: 7px;
font-style: normal;
font-weight: 700;
line-height: 13px;
text-align: center;
`;

const EntityBody = styled.div`
display: flex;
flex-direction: column;
padding: 1px 2px;
white-space: pre;
`;

const SimpleEntity = styled.div`
position: absolute;
left: ${p => p.$x}px;
top: ${p => p.$y}px;
width: 75px;
height: 51px;
border: 1px solid #cdb469;
background: #fde9b3;
box-shadow: 1px 2px 3px rgba(40, 60, 90, 0.4);
color: #222;
font-family: "Noto Sans", "Open Sans", sans-serif;
font-size: 7px;
font-weight: 700;
line-height: 48px;
text-align: center;
`;

const Caption = styled.div`
position: absolute;
left: ${p => p.$x}px;
top: ${p => p.$y}px;
color: #444;
font-family: "Noto Sans", sans-serif;
font-size: 7px;
font-weight: 600;
`;

const Selection = styled(Entity).attrs({ $x: 187, $y: 34, $w: 98, $h: 56, $bg: '#fdd1a5', $line: '#c57f48' })`
outline: 2px dotted #1c55c4;
box-shadow: 0 0 0 2px #5b8fe4, 1px 2px 5px 2px rgba(40, 60, 90, 0.4);
`;

const Popup = styled.div`
position: absolute;
left: 187px;
top: 100px;
width: 135px;
height: 30px;
display: grid;
grid-template-columns: repeat(10, 1fr);
align-items: center;
justify-items: center;
padding: 1px 8px 1px 2px;
border: 1px solid #999;
border-radius: 2px;
background: linear-gradient(#f2f2f2, #d3d4d6);
`;

const ColorButton = styled.button`
width: 9px;
height: 9px;
background: ${p => p.$color};
`;

const PopupClose = styled.button`
position: absolute;
top: 0;
right: 0;
`;

const Side = styled.aside`
display: flex;
flex-direction: column;
min-width: 0;
padding: 0 2px;
background: #f3f3f3;
`;

const SideTabs = styled.div`
display: flex;
height: 18px;
padding: 0 8px 0 2px;
border-bottom: 1px solid #bbb;
button {
    flex: 1;
    display: flex;
    align-items: center;
    justify-content: center;
}
`;

const ActiveSide = styled.button`
background: #8ccbf8;
`;

const PanelHeader = styled.div`
display: flex;
align-items: center;
gap: 3px;
height: 11px;
padding: 0 2px;
background: #cdcdcd;
h2 {
    flex: 1;
    margin: 0;
    font-size: 6px;
    font-weight: 400;
}
`;

const PanelTools = styled.div`
display: flex;
align-items: center;
gap: 3px;
height: ${p => p.$plain ? 12 : 13}px;
padding-left: 2px;
`;

const Grip = styled.i`
width: 2px;
height: 9px;
border-left: 1px dotted #555;
`;

const Space = styled.i`
width: 1px;
`;

const More = styled.span`
align-self: stretch;
margin-left: auto;
width: 8px;
background: #8e8e8e;
text-align: center;
`;

const ViewSelect = styled.div`
flex: 1;
display: flex;
align-items: center;
height: 12px;
margin-left: 1px;
padding: 0 2px;
background: #fff;
select {
    flex: 1;
    min-width: 0;
    appearance: none;
}
`;

const TreeBox = styled.div`
display: flex;
height: 156px;
border: 1px solid #999;
background: #fff;
`;

const TreeList = styled.ul`
${narrow}
flex: 1;
min-width: 0;
margin: 0;
padding: 0;
list-style: none;
display: flex;
flex-direction: column;
`;

const TreeRow = styled.li`
flex: 1;
min-height: 0;
display: flex;
align-items: center;
padding-left: ${p => p.$level * 10}px;
svg {
    flex: none;
}
${p => p.$selected && '> span:last-child { background: #c2c2c2; outline: 1px solid #aaa; outline-offset: -1px; }'}
`;

const Expander = styled.span`
width: 8px;
display: flex;
justify-content: center;
`;

const TreeLabel = styled.span`
flex: 1;
min-width: 0;
align-self: stretch;
display: flex;
align-items: center;
gap: 2px;
white-space: nowrap;
`;

const TreeScroll = styled.div`
width: 8px;
display: flex;
flex-direction: column;
align-items: center;
padding: 2px 0;
background: #f0f0f0;
`;

const TreeThumb = styled.div`
${thumb}
width: 8px;
height: 98px;
`;

const Form = styled.form`
flex: 1;
display: flex;
flex-direction: column;
gap: 3px;
padding-left: 2px;
border-bottom: 1px solid #888;
background: #fafafa;
`;

const NameFields = styled.div`
display: grid;
grid-template-columns: 31px 1fr;
row-gap: 1px;
align-items: center;
font-weight: 700;
input {
    font-weight: 400;
}
`;

const SizeFields = styled.div`
display: grid;
grid-template-columns: 31px 50px 1fr 34px;
row-gap: 1px;
align-items: center;
margin-top: 1px;
label:nth-of-type(even) {
    padding-left: 12px;
}
`;

const TextInput = styled.input`
width: 100%;
min-width: 0;
height: 11px;
padding: 0 1px;
border: 1px solid #999;
background: #fff;
`;

const Rule = styled.div`
height: 2px;
background: #7c7c7c;
`;

const SelectRow = styled.div`
display: flex;
align-items: center;
height: 11px;
white-space: nowrap;
label {
    width: 51px;
}
`;

const SelectBox = styled.div`
flex: 1;
height: 11px;
display: flex;
align-items: center;
padding: 0 2px 0 1px;
border: 1px solid #adadad;
background: ${p => p.$grey ? '#e1e1e1' : '#fff'};
select {
    flex: 1;
    min-width: 0;
    appearance: none;
}
`;

const DotsButton = styled.button`
width: 12px;
height: 11px;
margin: 0 2px 0 4px;
border: 1px solid #bbb;
background: #dedede;
line-height: 6px;
`;

const Checks = styled.div`
display: flex;
flex-wrap: wrap;
gap: 4px 6px;
padding-top: 5px;
label {
    display: flex;
    align-items: center;
    gap: 3px;
}
input {
    appearance: none;
    width: 7px;
    height: 7px;
    border: 1px solid #555;
    background: #fff;
}
`;

const Footer = styled.footer`
display: flex;
align-items: center;
height: 12px;
padding: 0 2px;
border-top: 1px solid #d5d5d5;
background: #f0f0f0;
`;

const StatusText = styled.span`
padding: 0 1px;
border-right: 1px solid #bbb;
`;

const StatusButton = styled.button`
display: flex;
align-items: center;
gap: 2px;
margin-right: auto;
padding-left: 1px;
`;

const FooterLink = styled.a`
padding-right: 2px;
border-right: 1px solid #bbb;
color: #1a2f9a;
`;

const Version = styled.span`
padding: 0 2px 0 3px;
border-right: 1px solid #bbb;
`;

const ZoomTools = styled.div`
display: flex;
align-items: center;
gap: 3px;
padding-left: 3px;
`;

const Slider = styled.input`
appearance: none;
width: 78px;
height: 9px;
background: repeating-linear-gradient(90deg, #999 0 1px, transparent 1px 5px) 0 50% / 100% 3px no-repeat, linear-gradient(#888, #888) 0 50% / 100% 1px no-repeat;
&::-webkit-slider-thumb {
    appearance: none;
    width: 5px;
    height: 9px;
    background: #555;
    clip-path: polygon(0 0, 100% 0, 100% 20%, 65% 40%, 65% 60%, 100% 80%, 100% 100%, 0 100%, 0 80%, 35% 60%, 35% 40%, 0 20%);
}
`;

const ZoomSelect = styled.div`
display: flex;
align-items: center;
width: 28px;
height: 10px;
padding: 0 1px;
border: 1px solid #aaa;
background: #fff;
select {
    flex: 1;
    min-width: 0;
    appearance: none;
    background: #1e78d7;
    color: #fff;
}
`;

const Watermark = styled.div`
position: absolute;
left: 300px;
top: 295px;
color: rgba(84, 92, 224, 0.5);
font-family: "DejaVu Sans", sans-serif;
font-size: 25px;
font-weight: 700;
line-height: 28px;
text-shadow: 0 0 1px rgba(220, 225, 255, 0.4);
pointer-events: none;
`;
